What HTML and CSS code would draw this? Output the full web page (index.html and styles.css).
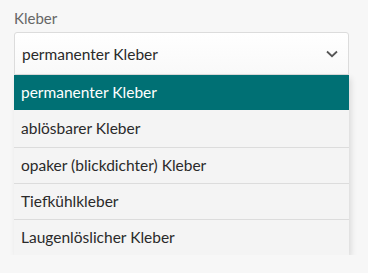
FILE: index.html
```html
<!DOCTYPE html>
<html lang="de">
<head>
  <meta charset="UTF-8" />
  <meta name="viewport" content="width=device-width, initial-scale=1.0"/>
  <title>Kleber</title>
  <link rel="stylesheet" href="styles.css">
</head>
<body>

  <div class="field">
    <label class="label">Kleber</label>
    <div class="select">
      <div class="select-box">
        <span>permanenter Kleber</span>
        <svg class="chevron" width="12" height="8" viewBox="0 0 12 8">
          <path d="M1 1.5 L6 6.2 L11 1.5" fill="none" stroke="#555" stroke-width="1.8"/>
        </svg>
      </div>
      <ul class="options">
        <li class="selected">permanenter Kleber</li>
        <li>ablösbarer Kleber</li>
        <li>opaker (blickdichter) Kleber</li>
        <li>Tiefkühlkleber</li>
        <li>Laugenlöslicher Kleber</li>
      </ul>
    </div>
  </div>

</body>
</html>
```

FILE: styles.css
```css
body {
  margin: 0;
  padding: 0;
  font-family: Lato, "Noto Sans", sans-serif;
  background: #f7f7f7;
  color: #333;
}

.field {
  padding: 9px 19px 0 14px;
}

.label {
  display: block;
  font-size: 15px;
  color: #666;
  line-height: 18px;
  margin-bottom: 5px;
}

.select {
  position: relative;
}

.select-box {
  height: 41px;
  display: flex;
  align-items: center;
  justify-content: space-between;
  padding: 0 10px 0 7px;
  background: linear-gradient(#ffffff, #f9f9f9);
  border: 1px solid #dcdcdc;
  border-radius: 3px 3px 0 0;
  font-size: 15.5px;
  color: #2a2a2a;
}

.options {
  list-style: none;
  margin: 0;
  padding: 0;
  background: #f4f4f4;
  box-shadow: 2px 3px 6px rgba(0,0,0,0.12);
}

.options li {
  height: 35px;
  line-height: 35px;
  padding: 0 7px;
  font-size: 15.5px;
  color: #2a2a2a;
  border-top: 1px solid #dcdcdc;
}

.options li.selected {
  background: #007074;
  color: #ffffff;
  border-top: none;
}

.options li.selected + li {
  border-top: none;
  height: 37px;
  line-height: 37px;
}
```
